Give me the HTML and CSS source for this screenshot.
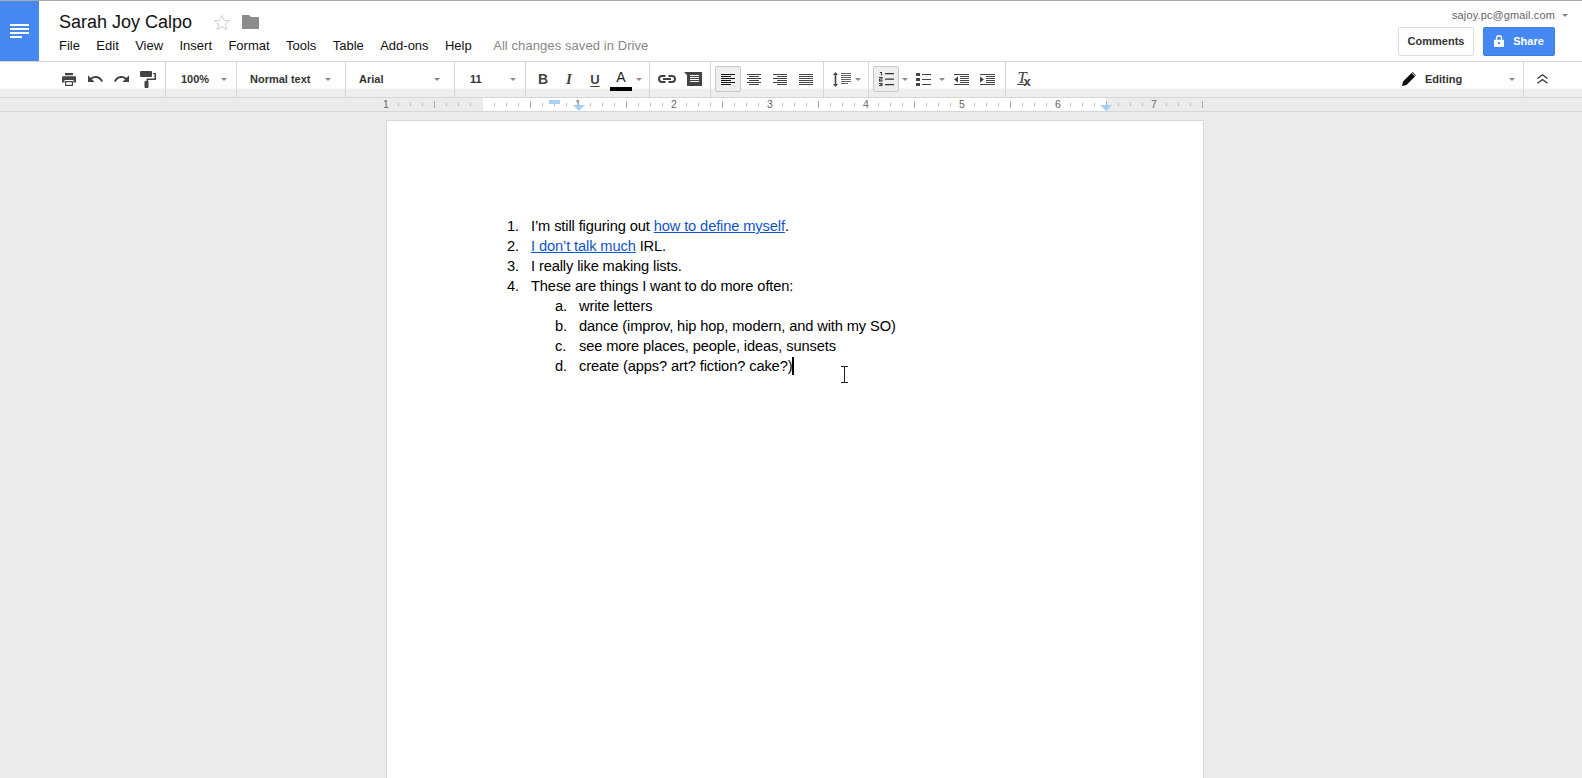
FILE: index.html
```html
<!DOCTYPE html>
<html lang="en">
<head>
<meta charset="utf-8">
<title>Sarah Joy Calpo</title>
<link rel="stylesheet" href="styles.css">
</head>
<body>
<header class="header">
  <div class="logo">
    <svg width="19" height="14" viewBox="0 0 19 14"><path fill="#fff" d="M0 0h19v2H0zM0 4h19v2H0zM0 8h19v2H0zM0 12h12v2H0z"/></svg>
  </div>
  <div class="titles">
    <div class="title-row">
      <span class="doc-title">Sarah Joy Calpo</span>
      <svg class="star" width="18" height="17" viewBox="0 0 18 17"><path fill="none" stroke="#cfcfcf" d="M9 1.500l2.200 5h5.300l-4.200 3.600 1.400 5.400L9 12.600l-4.700 2.900 1.400-5.400L1.500 6.500h5.300z"/></svg>
      <svg class="folder" width="17" height="14" viewBox="0 0 17 14"><path fill="#8c8c8c" d="M0 0h7l2 2h8v12H0z"/></svg>
    </div>
    <nav class="menu">
      <span>File</span><span>Edit</span><span>View</span><span>Insert</span><span>Format</span><span>Tools</span><span>Table</span><span>Add-ons</span><span>Help</span>
      <span class="saved">All changes saved in Drive</span>
    </nav>
  </div>
  <div class="account">
    <div class="email">sajoy.pc@gmail.com<i class="caret caret-email"></i></div>
    <div class="actions">
      <button class="btn btn-comments">Comments</button>
      <button class="btn btn-share">
        <svg width="10" height="12" viewBox="0 0 11 13"><path fill="#fff" fill-rule="evenodd" d="M2 5V3.500a3.500 3.500 0 0 1 7 0V5h1a1 1 0 0 1 1 1v6a1 1 0 0 1-1 1H1a1 1 0 0 1-1-1V6a1 1 0 0 1 1-1zm1.500 0h4V3.500a2 2 0 0 0-4 0zM5.500 7.500a1.300 1.300 0 1 0 0 2.600 1.300 1.300 0 0 0 0-2.600z"/></svg>
        Share
      </button>
    </div>
  </div>
</header>

<div class="toolbar">
  <div class="group g1">
    <span class="slot"><svg width="14" height="13" viewBox="0 0 14 13"><path fill="#444" fill-rule="evenodd" d="M3 0h8v2.300H3zM1 3.200h12a1 1 0 0 1 1 1V9.500h-2.500V7h-9v2.500H0V4.200a1 1 0 0 1 1-1zM3 8h8v5H3zm1.200 1.200v2.600h5.600V9.200z"/></svg></span>
    <span class="slot"><svg width="15" height="8" viewBox="2 7 20.500 10"><path fill="#444" d="M12.500 8c-2.650 0-5.050.99-6.900 2.600L2 7v9h9l-3.620-3.620c1.390-1.160 3.160-1.880 5.120-1.880 3.540 0 6.550 2.310 7.600 5.500l2.370-.78C21.080 11.030 17.150 8 12.500 8z"/></svg></span>
    <span class="slot"><svg width="15" height="8" viewBox="1.500 7 20.500 10"><path fill="#444" d="M18.400 10.600C16.550 8.990 14.150 8 11.500 8c-4.650 0-8.580 3.030-9.960 7.220L3.900 16c1.050-3.190 4.050-5.500 7.600-5.500 1.950 0 3.730.72 5.120 1.880L13 16h9V7l-3.600 3.600z"/></svg></span>
    <span class="slot slot-paint"><svg width="16" height="17" viewBox="0 0 16 17"><path fill="#444" d="M1 0h10a1 1 0 0 1 1 1v4a1 1 0 0 1-1 1H1a1 1 0 0 1-1-1V1a1 1 0 0 1 1-1zM13 2h3v7H8v2H6.500V7.500H14.500V3H13z"/><rect fill="#444" x="4.500" y="10" width="4" height="7" rx="1"/></svg></span>
  </div>
  <div class="group g2"><div class="select"><span>100%</span><i class="caret"></i></div></div>
  <div class="group g3"><div class="select"><span>Normal text</span><i class="caret"></i></div></div>
  <div class="group g4"><div class="select"><span>Arial</span><i class="caret"></i></div></div>
  <div class="group g5"><div class="select"><span>11</span><i class="caret"></i></div></div>
  <div class="group g6">
    <span class="slot glyph glyph-b">B</span>
    <span class="slot glyph glyph-i">I</span>
    <span class="slot glyph glyph-u">U</span>
    <span class="slot glyph-a"><span class="a-letter">A</span><i class="a-bar"></i></span>
    <i class="caret caret-inline caret-a"></i>
  </div>
  <div class="group g7">
    <span class="slot"><svg width="18" height="8" viewBox="0 0 18 8"><path fill="none" stroke="#444" stroke-width="2" d="M7.500 1H4a3 3 0 0 0 0 6h3.500M10.500 1H14a3 3 0 0 1 0 6h-3.500M5 4h8"/></svg></span>
    <span class="slot"><svg width="18" height="14" viewBox="0 0 18 14"><path fill="#444" d="M0 0h18v14H3V3z"/><path fill="#fff" d="M6 3h9v1H6zM6 5h9v1H6zM6 7h9v1H6zM6 9h9v1H6z"/></svg></span>
  </div>
  <div class="group g8">
    <span class="slot active"><svg width="14" height="11" viewBox="0 0 14 11"><path fill="#111" d="M0 0h14v1H0zM0 2h10v1H0zM0 4h14v1H0zM0 6h10v1H0zM0 8h14v1H0zM0 10h10v1H0z"/></svg></span>
    <span class="slot"><svg width="14" height="11" viewBox="0 0 14 11"><path fill="#444" d="M0 0h14v1H0zM2 2h10v1H2zM0 4h14v1H0zM2 6h10v1H2zM0 8h14v1H0zM2 10h10v1H2z"/></svg></span>
    <span class="slot"><svg width="14" height="11" viewBox="0 0 14 11"><path fill="#444" d="M0 0h14v1H0zM4 2h10v1H4zM0 4h14v1H0zM4 6h10v1H4zM0 8h14v1H0zM4 10h10v1H4z"/></svg></span>
    <span class="slot"><svg width="14" height="11" viewBox="0 0 14 11"><path fill="#444" d="M0 0h14v1H0zM0 2h14v1H0zM0 4h14v1H0zM0 6h14v1H0zM0 8h14v1H0zM0 10h14v1H0z"/></svg></span>
  </div>
  <div class="group g9">
    <span class="icon-line"><svg width="18" height="15" viewBox="0 0 18 15"><path fill="#444" d="M2.500 0L5 3H3.300v9H5l-2.500 3L0 12h1.700V3H0z"/><path fill="#666" d="M8 1h10v1H8zM8 3h10v1H8zM8 5h10v1H8zM8 7h10v1H8zM8 9h10v1H8zM8 11h7v1H8z"/></svg></span>
    <i class="caret caret-inline caret-line"></i>
  </div>
  <div class="group g10">
    <span class="slot active"><svg width="15" height="14" viewBox="0 0 15 14"><path fill="#333" d="M6 1h9v1.200H6zM6 6.500h9v1.200H6zM6 12h9v1.200H6z"/><path fill="#333" d="M1 0h2v3.500H2V1H1zM0 5h3.500v2.500H1v.8h2.500V9.500H0V7h2.500v-.8H0zM0 11h3.500v3H0v-1h2.500v-.4H1v-.8h1.500V12H0z"/></svg></span>
    <i class="caret caret-inline caret-num"></i>
    <span class="slot slot-bullet"><svg width="15" height="13" viewBox="0 0 15 13"><path fill="#444" d="M0 0h4v3H0zM0 5h4v3H0zM0 10h4v3H0zM6 1h9v1H6zM6 6h9v1H6zM6 11h9v1H6z"/></svg></span>
    <i class="caret caret-inline caret-bul"></i>
    <span class="slot slot-indent"><svg width="15" height="11" viewBox="0 0 15 11"><path fill="#444" d="M0 0h15v1H0zM6 2h9v1H6zM6 4h9v1H6zM6 6h9v1H6zM6 8h9v1H6zM0 10h15v1H0zM4 2.500v6L0 5.500z"/></svg></span>
    <span class="slot"><svg width="15" height="11" viewBox="0 0 15 11"><path fill="#444" d="M0 0h15v1H0zM6 2h9v1H6zM6 4h9v1H6zM6 6h9v1H6zM6 8h9v1H6zM0 10h15v1H0zM0 2.500v6l4-3z"/></svg></span>
  </div>
  <div class="group g11">
    <span class="slot glyph-tx"><span class="tx-t">T</span><span class="tx-x">x</span></span>
  </div>
  <div class="group g12">
    <svg class="pencil" width="14" height="14" viewBox="0 0 14 14"><path fill="#111" d="M0 14l1-4.500L9.500 1l3.500 3.500L4.500 13zM10.500 0l3.500 3.500-.6.600L9.900.6z"/></svg>
    <span class="mode">Editing</span>
    <i class="caret caret-inline caret-mode"></i>
  </div>
  <div class="collapse">
    <svg width="11" height="10" viewBox="0 0 11 10"><path fill="none" stroke="#333" stroke-width="1.300" d="M.5 4.500L5.500 .8l5 3.700M.5 9.300l5-3.700 5 3.700"/></svg>
  </div>
</div>

<div class="ruler-bar">
  <div class="ruler">
    <div class="ruler-numbers">
      <span>1</span><span></span><span>1</span><span>2</span><span>3</span><span>4</span><span>5</span><span>6</span><span>7</span>
    </div>
    <i class="indent-rect"></i>
    <i class="marker marker-left"></i>
    <i class="marker marker-right"></i>
  </div>
</div>

<main class="canvas">
  <div class="page">
    <ol class="list">
      <li>I’m still figuring out <a href="#">how to define myself</a>.</li>
      <li><a href="#">I don’t talk much</a> IRL.</li>
      <li>I really like making lists.</li>
      <li>These are things I want to do more often:
        <ol class="sublist">
          <li>write letters</li>
          <li>dance (improv, hip hop, modern, and with my SO)</li>
          <li>see more places, people, ideas, sunsets</li>
          <li>create (apps? art? fiction? cake?)<i class="text-caret"></i></li>
        </ol>
      </li>
    </ol>
    <svg class="ibeam" width="9" height="17" viewBox="0 0 9 17"><path fill="none" stroke="#222" d="M1 .5h7M4.500.5v16M1 16.500h7"/></svg>
  </div>
</main>
</body>
</html>
```
FILE: styles.css
```css
* { box-sizing: border-box; }
html, body { margin: 0; height: 778px; overflow: hidden; }
body { font-family: "Liberation Sans", Arial, sans-serif; background: #ebebeb; color: #000; }
i { display: block; }

.header { display: flex; height: 62px; background: #fff; border-top: 1px solid #a8a8a8; border-bottom: 1px solid #d6d6d6; }
.logo { width: 39px; height: 60px; background: #4688f1; display: flex; align-items: center; justify-content: center; }
.titles { padding: 9px 0 0 20px; flex: 1; }
.title-row { display: flex; align-items: center; height: 24px; }
.doc-title { font-size: 18px; color: #111; }
.star { margin-left: 21px; }
.folder { margin-left: 11px; }
.menu { display: flex; margin-top: 4px; font-size: 13px; line-height: 16px; color: #111; gap: 16.400px; }
.saved { color: #888; margin-left: 5px; letter-spacing: .08px; }

.account { width: 200px; padding: 7px 27px 0 0; display: flex; flex-direction: column; align-items: flex-end; }
.email { font-size: 11px; line-height: 14px; color: #666; letter-spacing: .12px; margin-right: -13px; display: flex; align-items: center; }
.caret-email { margin-left: 7px; border-left-width: 4px; border-right-width: 4px; border-top-width: 4px; }
.actions { display: flex; gap: 9px; margin-top: 5px; }
.btn { height: 29px; padding: 0 0 2px; font-family: inherit; font-size: 11px; font-weight: bold; border-radius: 2px; display: flex; align-items: center; justify-content: center; }
.btn-comments { width: 76px; background: #fff; color: #333; border: 1px solid #dcdcdc; }
.btn-share { width: 72px; background: #4688f1; color: #fff; border: 1px solid #3f7fe8; gap: 9px; }

.toolbar { display: flex; height: 36px; border-bottom: 1px solid #d6d6d6; background: linear-gradient(#fff 0 26px, #f6f6f6 26px 27px, #eee 27px); }
.group { display: flex; align-items: flex-start; padding-top: 4px; border-right: 1px solid #d6d6d6; height: 35px; flex: none; }
.g1 { width: 166px; padding-left: 56px; }
.g2 { width: 71px; }
.g3 { width: 109px; }
.g4 { width: 109px; }
.g5 { width: 71px; }
.g6 { width: 124px; padding-left: 4px; }
.g7 { width: 61px; padding-left: 4px; }
.g8 { width: 113px; padding-left: 4px; }
.g9 { width: 45px; padding-left: 9px; }
.g10 { width: 137px; padding-left: 4px; }
.g11 { width: 389px; padding-left: 5px; border-right: 0; }
.g12 { width: 129px; padding-left: 7px; }

.slot { width: 26px; height: 26px; display: flex; align-items: center; justify-content: center; flex: none; }
.slot-paint { margin-left: 1px; }
.active { background: #eee; border: 1px solid #c8c8c8; border-radius: 2px; }

.select { flex: 1; height: 26px; display: flex; align-items: center; justify-content: space-between; font-size: 11px; font-weight: bold; color: #333; }
.g2 .select { padding: 0 9px 0 15px; }
.g3 .select { padding: 0 14px 0 13px; }
.g4 .select { padding: 0 14px 0 13px; }
.g5 .select { padding: 0 9px 0 15px; }

.caret { width: 0; height: 0; border-left: 3px solid transparent; border-right: 3px solid transparent; border-top: 3px solid #888; }
.caret-inline { margin-top: 12px; flex: none; }
.caret-a { margin-left: 2px; }
.caret-line { margin-left: 4px; }
.caret-num { margin-left: 3px; }
.slot-bullet { margin-left: 2px; }
.caret-bul { margin-left: 3px; }
.slot-indent { margin-left: 3px; }
.caret-mode { margin-left: 47px; }

.glyph { color: #444; }
.glyph-b { font: bold 14px "Liberation Sans", sans-serif; }
.glyph-i { font: italic bold 15px "Liberation Serif", serif; }
.glyph-u { font: bold 13px "Liberation Sans", sans-serif; text-decoration: underline; text-underline-offset: 2px; }
.glyph-a { width: 26px; height: 26px; flex: none; display: flex; flex-direction: column; align-items: center; }
.a-letter { font-size: 14px; line-height: 16px; color: #222; margin-top: 2px; }
.a-bar { width: 22px; height: 4px; background: #000; margin-top: 2px; }
.glyph-tx { color: #444; align-items: flex-start; }
.tx-t { font: italic 17px/20px "Liberation Serif", serif; text-decoration: underline; margin-top: 2px; }
.tx-x { font: bold 13px/14px "Liberation Sans", sans-serif; margin: 9px 0 0 -3px; }
.icon-line { height: 26px; display: flex; align-items: center; }

.pencil { margin-top: 6px; flex: none; }
.mode { font-size: 11px; font-weight: bold; color: #333; line-height: 26px; margin-left: 9px; }
.collapse { width: 36px; height: 26px; margin-top: 4px; display: flex; align-items: center; justify-content: center; }

.ruler-bar { height: 14px; border-bottom: 1px solid #d6d6d6; background: #ebebeb; }
.ruler {
  position: relative;
  width: 818px;
  height: 13px;
  margin-left: 386px;
  background:
    repeating-linear-gradient(90deg, transparent 0 12px, #bbb 12px 13px, transparent 13px 24px, #bbb 24px 25px, transparent 25px 36px, #bbb 36px 37px, transparent 37px 60px, #bbb 60px 61px, transparent 61px 72px, #bbb 72px 73px, transparent 73px 84px, #bbb 84px 85px, transparent 85px 96px) 0 5px / 100% 3px no-repeat,
    repeating-linear-gradient(90deg, transparent 0 48px, #aaa 48px 49px, transparent 49px 96px) 0 3px / 100% 7px no-repeat,
    linear-gradient(90deg, #ebebeb 97px, #fff 97px 720px, #ebebeb 720px);
}
.ruler-numbers { display: flex; margin-left: -48px; font-size: 10.500px; line-height: 13px; color: #666; }
.ruler-numbers span { width: 96px; flex: none; text-align: center; }
.indent-rect { position: absolute; left: 163px; top: 2px; width: 11px; height: 4px; background: #aad2f5; }
.marker { position: absolute; top: 7px; width: 0; height: 0; border-left: 6px solid transparent; border-right: 6px solid transparent; border-top: 6px solid #a6cff5; }
.marker-left { left: 187px; }
.marker-right { left: 714px; }

.canvas { padding-top: 8px; }
.page { position: relative; width: 818px; height: 1056px; margin-left: 386px; background: #fff; border: 1px solid #d8d8d8; padding: 95px 0 0 96px; }

.list, .sublist { list-style: none; margin: 0; padding: 0; font-size: 14.670px; line-height: 20px; letter-spacing: -.12px; }
.list { counter-reset: num; }
.list > li { counter-increment: num; padding-left: 48px; position: relative; }
.list > li::before { content: counter(num) "."; position: absolute; left: 24px; }
.sublist { counter-reset: alpha; }
.sublist > li { counter-increment: alpha; padding-left: 48px; position: relative; }
.sublist > li::before { content: counter(alpha, lower-alpha) "."; position: absolute; left: 24px; }
.list a { color: #1155cc; text-decoration: underline; }
.text-caret { display: inline-block; width: 2px; height: 18px; background: #000; vertical-align: -4px; }
.ibeam { position: absolute; left: 453px; top: 245px; }
```
